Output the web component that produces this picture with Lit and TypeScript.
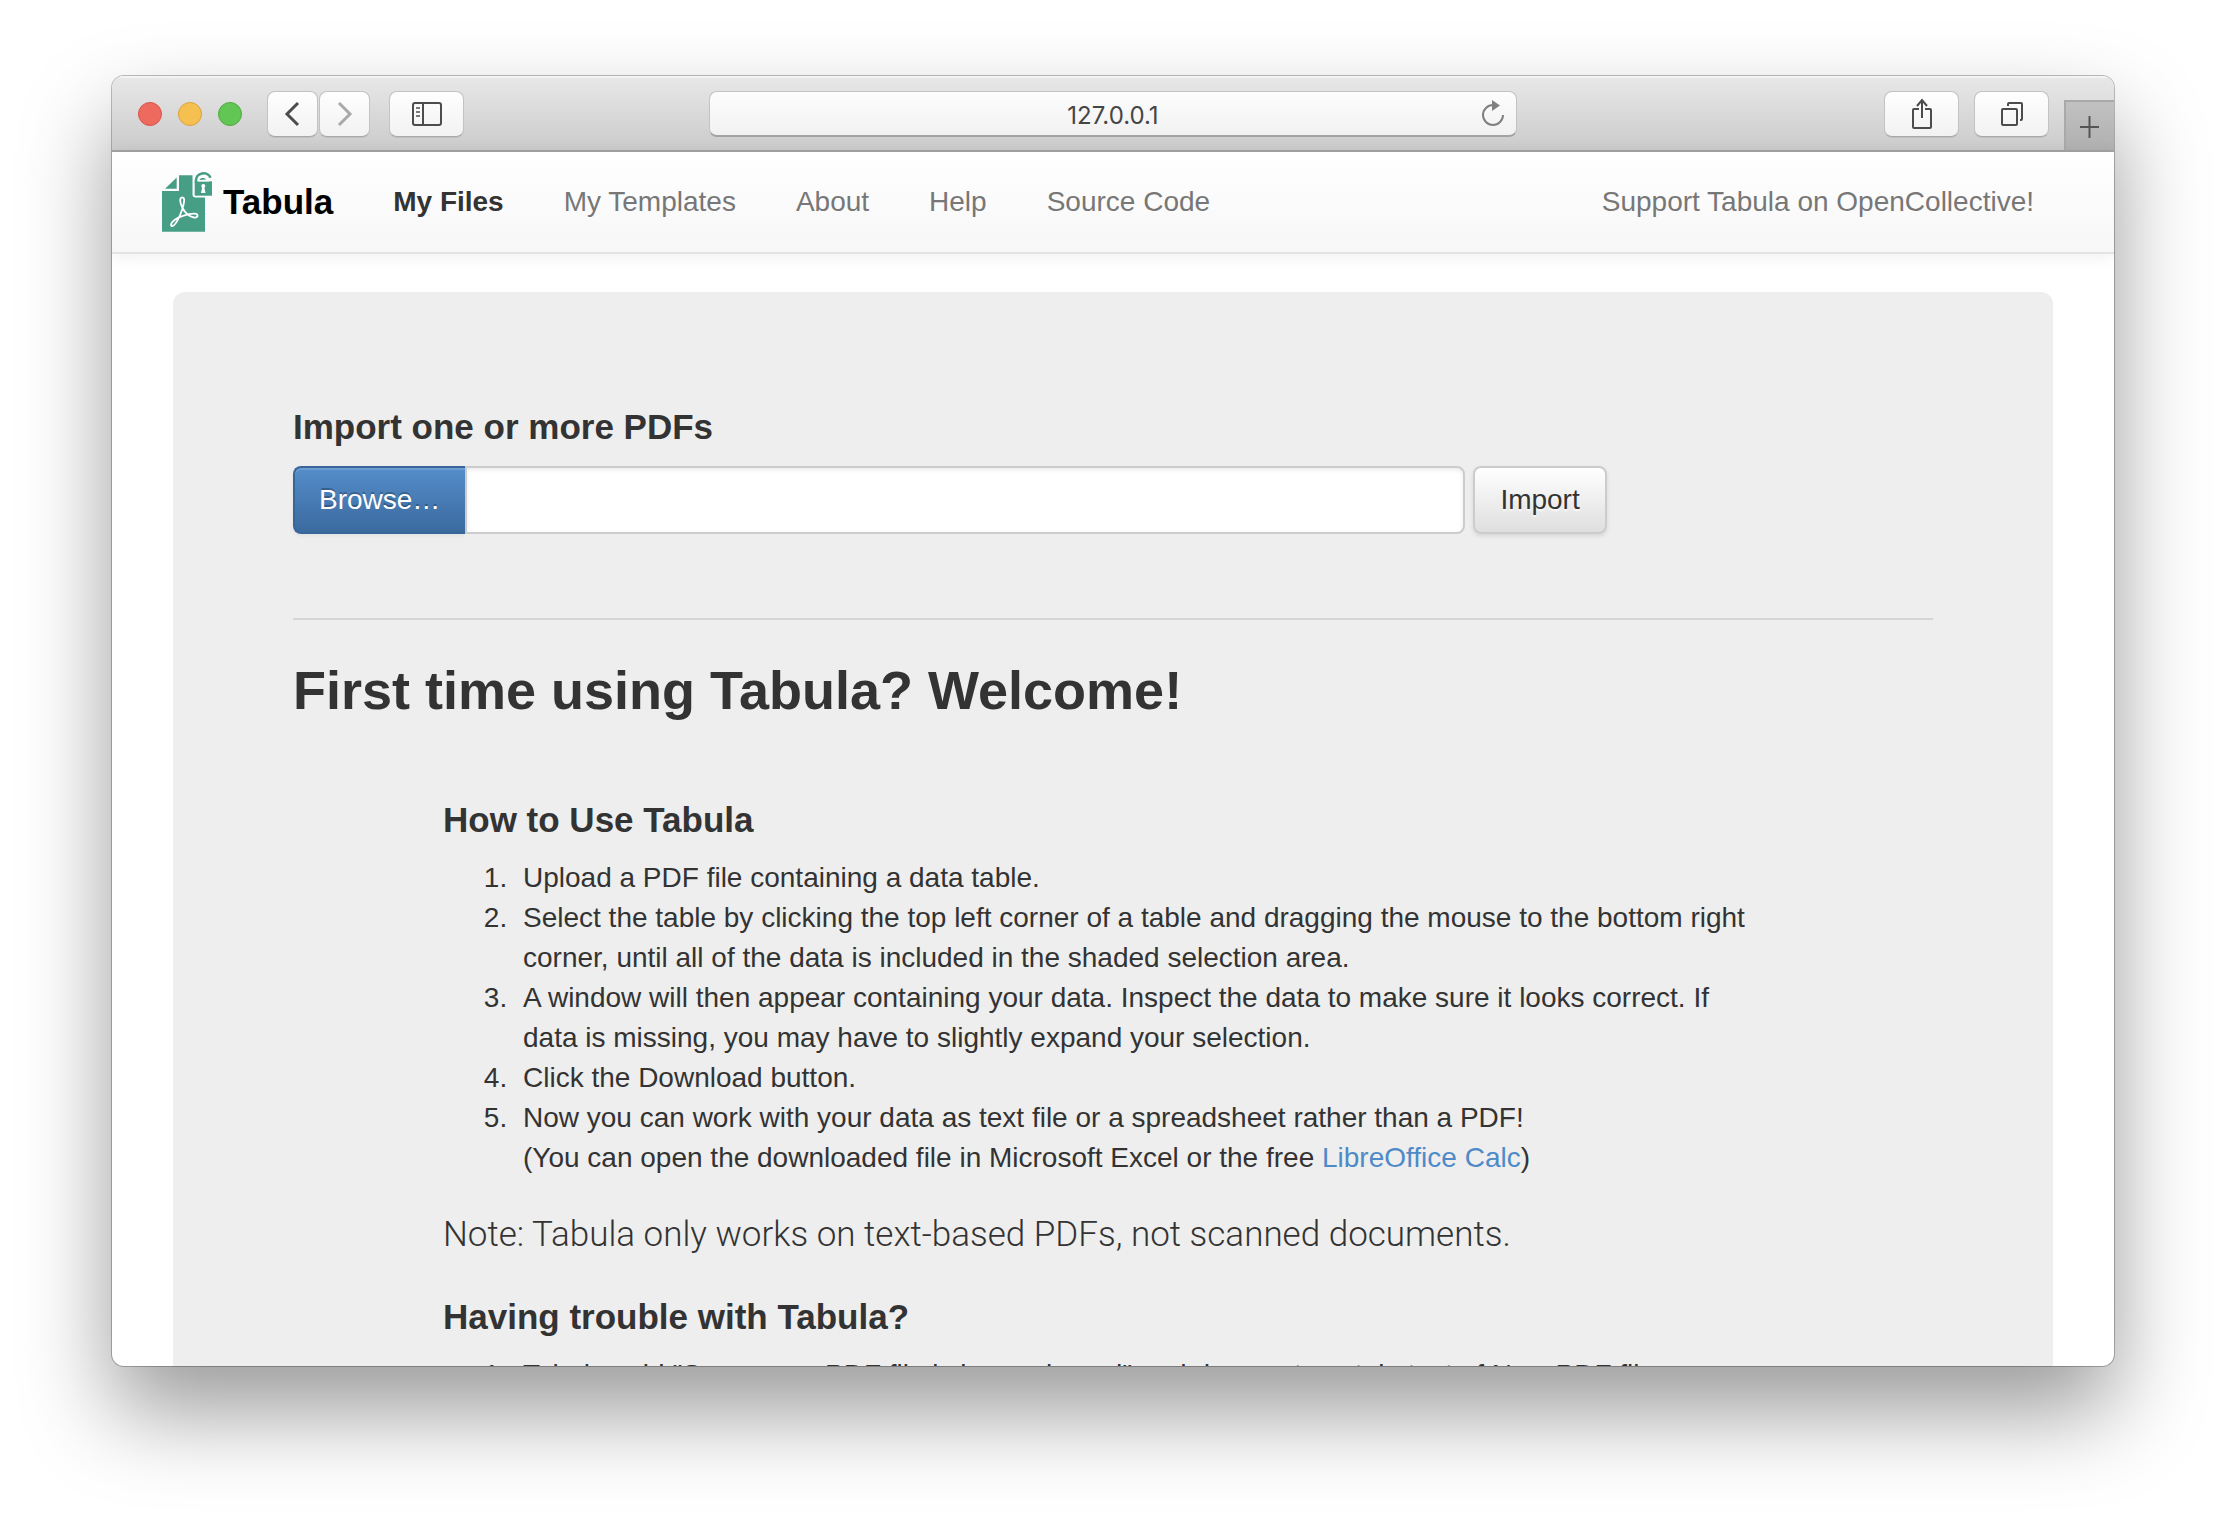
import { LitElement, html, svg, css } from "lit";
import { customElement, property } from "lit/decorators.js";

const icons = {
  back: svg`<path d="M21 1 L10 12 L21 23" fill="none" stroke="#4c4c4c" stroke-width="3"/>`,
  forward: svg`<path d="M10 1 L21 12 L10 23" fill="none" stroke="#a9a9a9" stroke-width="3"/>`,
  sidebar: svg`<rect x="2" y="1" width="28" height="22" rx="2" fill="none" stroke="#4c4c4c" stroke-width="2"/>
    <path d="M12 1V23" stroke="#4c4c4c" stroke-width="2"/>
    <path d="M5 6H9M5 10H9M5 14H9" stroke="#7a7a7a" stroke-width="2"/>`,
  reload: svg`<path d="M17 3 A10 10 0 1 0 27 13" fill="none" stroke="#808080" stroke-width="2"/>
    <path d="M16 -2 L24 3.500 L16 9Z" fill="#808080"/>`,
  share: svg`<path d="M13 7H8a1 1 0 0 0-1 1V25a1 1 0 0 0 1 1H24a1 1 0 0 0 1-1V8a1 1 0 0 0-1-1H19" fill="none" stroke="#4c4c4c" stroke-width="2"/>
    <path d="M16 16V-2M11 4L16 -2L21 4" fill="none" stroke="#4c4c4c" stroke-width="2"/>`,
  tabs: svg`<rect x="6" y="7" width="15" height="16" rx="1" fill="none" stroke="#4c4c4c" stroke-width="2"/>
    <path d="M12 4V2a1 1 0 0 1 1-1H25a1 1 0 0 1 1 1V17a1 1 0 0 1-1 1H24" fill="none" stroke="#4c4c4c" stroke-width="2"/>`,
  plus: svg`<path d="M6 13H25M15.500 2V24" stroke="#555" stroke-width="2"/>`,
};

@customElement("browser-toolbar")
class BrowserToolbar extends LitElement {
  @property() address = "";

  static styles = css`
    :host { display: block; }
    .bar {
      display: grid;
      grid-template-columns: 1fr minmax(0, 808px) 1fr;
      align-items: center;
      height: 76px;
      background: linear-gradient(#e8e8e8, #cbcbcb);
      border-bottom: 2px solid #a3a3a3;
      box-shadow: inset 0 2px 0 #f3f3f3;
      box-sizing: border-box;
      padding-top: 2px;
    }
    .side { display: flex; align-items: center; height: 72px; }
    .start { padding-left: 26px; }
    .end { justify-content: flex-end; }
    .light {
      width: 24px;
      height: 24px;
      border-radius: 50%;
      border: 1px solid;
      padding: 0;
      box-sizing: border-box;
      margin-right: 16px;
    }
    .red { background: #ee6a5f; border-color: #d9544a; }
    .yellow { background: #f5c04f; border-color: #dba23c; }
    .green { background: #62c655; border-color: #50a93f; }
    .btn {
      display: flex;
      align-items: center;
      justify-content: center;
      height: 46px;
      box-sizing: border-box;
      border: 1px solid #c3c3c3;
      border-bottom-color: #a8a8a8;
      border-radius: 8px;
      background: linear-gradient(#fefefe, #f2f2f2);
      box-shadow: 0 1px 0 rgba(0, 0, 0, 0.08);
      padding: 0;
    }
    .nav { width: 51px; margin-right: 1px; }
    .gap { margin-left: 9px; }
    .lead { margin-left: 18px; }
    .wide { width: 75px; }
    .end .btn { width: 75px; margin-right: 15px; flex: none; }
    svg { width: 32px; height: 24px; overflow: visible; }
    .address {
      display: flex;
      align-items: center;
      height: 46px;
      box-sizing: border-box;
      border: 1px solid #c3c3c3;
      border-bottom: 2px solid #a0a3a0;
      border-radius: 8px;
      background: linear-gradient(#fdfdfd, #f1f1f1);
      padding: 0 8px 0 40px;
    }
    .url {
      flex: 1;
      min-width: 0;
      border: 0;
      outline: 0;
      background: none;
      text-align: center;
      padding: 4px 0 0;
      font: 24px/30px Inter, "Liberation Sans", sans-serif;
      color: #454545;
    }
    .plain { border: 0; background: none; padding: 0; display: flex; }
    .add {
      align-self: flex-end;
      flex: none;
      width: 50px;
      height: 50px;
      border: 0;
      border-top: 2px solid #a9a9a9;
      border-left: 2px solid #a9a9a9;
      background: linear-gradient(#c1c1c1, #b0b0b0);
      padding: 0;
      display: flex;
      align-items: center;
      justify-content: center;
    }
  `;

  private icon(shape: unknown) {
    return html`<svg viewBox="0 0 32 24" aria-hidden="true">${shape}</svg>`;
  }

  render() {
    return html`
      <div class="bar">
        <div class="side start">
          <button class="light red" aria-label="Close"></button>
          <button class="light yellow" aria-label="Minimize"></button>
          <button class="light green" aria-label="Zoom"></button>
          <button class="btn nav gap" aria-label="Back">${this.icon(icons.back)}</button>
          <button class="btn nav" aria-label="Forward">${this.icon(icons.forward)}</button>
          <button class="btn wide lead" aria-label="Sidebar">${this.icon(icons.sidebar)}</button>
        </div>
        <div class="address">
          <input class="url" type="text" aria-label="Address" .value=${this.address} />
          <button class="plain" aria-label="Reload">${this.icon(icons.reload)}</button>
        </div>
        <div class="side end">
          <button class="btn" aria-label="Share">${this.icon(icons.share)}</button>
          <button class="btn" aria-label="Show tabs">${this.icon(icons.tabs)}</button>
          <button class="add" aria-label="New tab">${this.icon(icons.plus)}</button>
        </div>
      </div>
    `;
  }
}

@customElement("site-nav")
class SiteNav extends LitElement {
  static styles = css`
    :host { display: block; position: relative; }
    .nav {
      display: flex;
      align-items: center;
      gap: 60px;
      height: 102px;
      box-sizing: border-box;
      padding: 0 80px 0 50px;
      background: linear-gradient(#ffffff, #f7f7f7);
      border-bottom: 2px solid #e4e4e4;
      box-shadow: 0 2px 16px rgba(0, 0, 0, 0.07);
      font: 28px/40px "Liberation Sans", Arial, sans-serif;
    }
    a { color: #777; text-decoration: none; white-space: nowrap; }
    .brand {
      display: flex;
      align-items: center;
      gap: 10px;
      font-size: 35px;
      font-weight: 700;
      color: #000;
    }
    .logo { width: 51px; height: 60px; }
    .active { color: #333; font-weight: 700; }
    .support { margin-left: auto; }
  `;

  render() {
    return html`
      <nav class="nav">
        <a class="brand" href="#">
          <svg class="logo" viewBox="0 0 51 60" aria-hidden="true">
            <path d="M17 3.300H43V59.700H0V19H17Z" fill="#469e85"/>
            <path d="M3 16.800L14.700 5.500V16.800Z" fill="#469e85"/>
            <path d="M30.500 3V22.500a3 3 0 0 0 3 3H51V0H33Z" fill="#fdfdfd"/>
            <rect x="32.700" y="9.300" width="17.300" height="14.400" fill="#469e85"/>
            <path d="M34 11V8.500A7.500 7 0 0 1 48.500 5.800" fill="none" stroke="#469e85" stroke-width="2.600"/>
            <path d="M36 9.500C36 4.500 45 3.500 47 8.500V9.500Z" fill="#fdfdfd"/>
            <path d="M37.500 8C38.500 5.500 42.500 5.500 44 7.500Z" fill="#469e85"/>
            <circle cx="41.300" cy="14" r="2" fill="#fff"/>
            <path d="M40.500 14H42L43.500 21H39Z" fill="#fff"/>
            <path d="M20.300 25.300C17 25.500 18 31 20.500 36C23 41 28 45 32 45.500C37 46 36.500 41.500 32 41.700C26 42 17 44.500 12.500 48C8 51.500 8.500 54.500 10.500 54C13.500 53.500 18 44 20 38C22 32 23.500 25.300 20.300 25.300Z" fill="none" stroke="#fff" stroke-width="1.800"/>
          </svg>
          Tabula
        </a>
        <a class="active" href="#files">My Files</a>
        <a href="#templates">My Templates</a>
        <a href="#about">About</a>
        <a href="#help">Help</a>
        <a href="#source">Source Code</a>
        <a class="support" href="#support">Support Tabula on OpenCollective!</a>
      </nav>
    `;
  }
}

@customElement("app-root")
class AppRoot extends LitElement {
  static styles = css`
    :host { display: block; }
    .desktop {
      display: flex;
      height: 100vh;
      box-sizing: border-box;
      padding: 76px 112px 148px;
      background: #fff;
      color: #333;
      font: 28px/40px "Liberation Sans", Arial, sans-serif;
    }
    .window {
      display: flex;
      flex-direction: column;
      flex: 1;
      min-width: 0;
      overflow: hidden;
      border-radius: 12px;
      background: #fff;
      box-shadow: 0 0 0 1px rgba(0, 0, 0, 0.25), 0 45px 90px rgba(0, 0, 0, 0.4);
    }
    .page { flex: 1; min-height: 0; overflow: hidden; }
    .well {
      margin: 38px 61px 60px;
      padding: 115px 120px;
      border-radius: 12px;
      background: #eee;
    }
    .title { font-size: 35px; font-weight: 700; line-height: 40px; margin: 0; display: block; }
    .form { display: flex; margin-top: 19px; }
    .browse, .import {
      height: 68px;
      box-sizing: border-box;
      padding: 0 24px;
      font: inherit;
      border: 2px solid #ccc;
    }
    .browse {
      border-color: #38669b;
      border-right: 0;
      border-radius: 8px 0 0 8px;
      padding: 0 25px 0 24px;
      color: #fff;
      text-shadow: 0 -2px 0 rgba(0, 0, 0, 0.25);
      background: linear-gradient(#548dc9, #3b6a9f);
      box-shadow: inset 0 2px 0 rgba(255, 255, 255, 0.15), 0 2px 4px rgba(0, 0, 0, 0.05);
    }
    .file {
      flex: 0 1 1000px;
      min-width: 0;
      height: 68px;
      box-sizing: border-box;
      border: 2px solid #ccc;
      border-radius: 0 8px 8px 0;
      background: #fff;
      padding: 0 12px;
      font: inherit;
      color: #333;
      outline: 0;
      box-shadow: inset 0 2px 4px rgba(0, 0, 0, 0.08);
    }
    .import {
      margin-left: 8px;
      padding: 0 25px;
      border-radius: 8px;
      color: #333;
      text-shadow: 0 2px 2px rgba(255, 255, 255, 0.75);
      background: linear-gradient(#fff, #dfdfdf);
      box-shadow: 0 2px 4px rgba(0, 0, 0, 0.1);
    }
    .rule { border: 0; border-top: 2px solid #d5d5d5; margin: 84px 0 30px; }
    .welcome { font-size: 54px; line-height: 80px; font-weight: 700; margin: 0; }
    .guide { margin: 70px 172px 0 150px; }
    .steps { margin: 18px 0 36px; padding-left: 72px; }
    .steps li { padding-left: 8px; }
    .note {
      margin: 0 0 41px;
      font: 300 35px/42px Roboto, "Liberation Sans", sans-serif;
    }
    .link { color: #4f8ac8; text-decoration: none; }
  `;

  render() {
    return html`
      <div class="desktop">
        <main class="window">
          <browser-toolbar address="127.0.0.1"></browser-toolbar>
          <site-nav></site-nav>
          <div class="page">
            <div class="well">
              <label class="title" for="file">Import one or more PDFs</label>
              <div class="form">
                <button class="browse">Browse…</button>
                <input class="file" id="file" type="text" />
                <button class="import">Import</button>
              </div>
              <hr class="rule" />
              <h1 class="welcome">First time using Tabula? Welcome!</h1>
              <div class="guide">
                <h4 class="title">How to Use Tabula</h4>
                <ol class="steps">
                  <li>Upload a PDF file containing a data table.</li>
                  <li>Select the table by clicking the top left corner of a table and dragging the mouse to the bottom right corner, until all of the data is included in the shaded selection area.</li>
                  <li>A window will then appear containing your data. Inspect the data to make sure it looks correct. If data is missing, you may have to slightly expand your selection.</li>
                  <li>Click the Download button.</li>
                  <li>Now you can work with your data as text file or a spreadsheet rather than a PDF!<br />(You can open the downloaded file in Microsoft Excel or the free <a class="link" href="#calc">LibreOffice Calc</a>)</li>
                </ol>
                <p class="note">Note: Tabula only works on text-based PDFs, not scanned documents.</p>
                <h4 class="title">Having trouble with Tabula?</h4>
                <ol class="steps">
                  <li>Tabula said "Sorry, your PDF file is image-based" and does not contain text of New PDF files.</li>
                </ol>
              </div>
            </div>
          </div>
        </main>
      </div>
    `;
  }
}
